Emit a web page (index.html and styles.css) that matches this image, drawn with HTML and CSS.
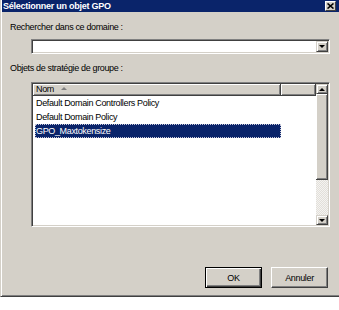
FILE: index.html
```html
<!DOCTYPE html>
<html lang="fr">
<head>
  <meta charset="UTF-8">
  <title>Sélectionner un objet GPO</title>
<link rel="stylesheet" href="styles.css">
</head>
<body>
  <div class="window">
    <div class="titlebar">
      <span class="title">Sélectionner un objet GPO</span>
      <span class="close-btn">
        <svg width="7" height="6" viewBox="0 0 7 6"><path d="M0.5 0.5 L6.5 5.5 M6.5 0.5 L0.5 5.5" stroke="#000" stroke-width="1.6"/></svg>
      </span>
    </div>

    <div class="content">
      <div class="label label-first">Rechercher dans ce domaine :</div>
      <div class="combo">
        <div class="combo-field"></div>
        <div class="combo-btn"><span class="arrow-down"></span></div>
      </div>

      <div class="label label-second">Objets de stratégie de groupe :</div>
      <div class="listview">
        <div class="lv-main">
          <div class="lv-header">
            <div class="lv-col col-name">Nom <span class="sort-up"></span></div>
            <div class="lv-col col-extra"></div>
          </div>
          <div class="lv-rows">
            <div class="lv-row">Default Domain Controllers Policy</div>
            <div class="lv-row">Default Domain Policy</div>
            <div class="lv-row selected">GPO_Maxtokensize</div>
          </div>
        </div>
        <div class="scrollbar">
          <div class="sb-btn"><span class="arrow-up"></span></div>
          <div class="sb-thumb"></div>
          <div class="sb-track"></div>
          <div class="sb-btn"><span class="arrow-down"></span></div>
        </div>
      </div>

      <div class="buttons">
        <button class="btn btn-default">OK</button>
        <button class="btn">Annuler</button>
      </div>
    </div>
  </div>
</body>
</html>
```

FILE: styles.css
```css
* {
  box-sizing: border-box;
}

html, body {
  margin: 0;
  padding: 0;
  background-color: #fff;
}

body {
  font-family: "Liberation Sans", Arial, sans-serif;
  font-size: 9px;
  letter-spacing: -0.35px;
  color: #000;
}

.window {
  width: 339px;
  height: 297px;
  background-color: #d4d0c8;
  border-left: 1px solid #d4d0c8;
  border-bottom: 1px solid #404040;
  box-shadow: inset 1px 0 #fff, inset 0 -1px #808080;
  padding-left: 1px;
}

.titlebar {
  height: 12px;
  background-color: #0a246a;
  color: #fff;
  display: flex;
  align-items: center;
  justify-content: space-between;
  padding: 0 3px 0 1px;
}

.title {
  font-weight: bold;
  font-size: 9px;
  letter-spacing: -0.25px;
}

.close-btn {
  width: 11px;
  height: 10px;
  background-color: #d4d0c8;
  border-top: 1px solid #fff;
  border-left: 1px solid #fff;
  border-right: 1px solid #404040;
  border-bottom: 1px solid #404040;
  display: flex;
  align-items: center;
  justify-content: center;
}

.content {
  padding: 0 11px 0 8px;
}

.label {
  line-height: 12px;
}

.label-first {
  margin-top: 9px;
}

.label-second {
  margin-top: 8px;
}

.combo {
  margin: 6px 0 0 21px;
  width: 299px;
  height: 15px;
  display: flex;
  background-color: #fff;
  border-top: 1px solid #808080;
  border-left: 1px solid #808080;
  border-right: 1px solid #fff;
  border-bottom: 1px solid #fff;
  box-shadow: inset 1px 1px #404040, inset -1px -1px #d4d0c8;
  padding: 1px;
}

.combo-field {
  flex: 1;
}

.combo-btn,
.sb-btn {
  width: 12px;
  background-color: #d4d0c8;
  border-top: 1px solid #d4d0c8;
  border-left: 1px solid #d4d0c8;
  border-right: 1px solid #404040;
  border-bottom: 1px solid #404040;
  box-shadow: inset 1px 1px #fff, inset -1px -1px #808080;
  display: flex;
  align-items: center;
  justify-content: center;
}

.arrow-down {
  width: 0;
  height: 0;
  border-left: 3px solid transparent;
  border-right: 3px solid transparent;
  border-top: 3px solid #000;
}

.arrow-up {
  width: 0;
  height: 0;
  border-left: 3px solid transparent;
  border-right: 3px solid transparent;
  border-bottom: 3px solid #000;
}

.listview {
  margin: 8px 0 0 21px;
  width: 299px;
  height: 145px;
  display: flex;
  background-color: #fff;
  border-top: 1px solid #808080;
  border-left: 1px solid #808080;
  border-right: 1px solid #fff;
  border-bottom: 1px solid #fff;
  box-shadow: inset 1px 1px #404040, inset -1px -1px #d4d0c8;
  padding: 1px;
}

.lv-main {
  flex: 1;
  display: flex;
  flex-direction: column;
}

.lv-header {
  display: flex;
  height: 12px;
}

.lv-col {
  background-color: #d4d0c8;
  border-right: 1px solid #404040;
  border-bottom: 1px solid #404040;
  box-shadow: inset 1px 1px #fff, inset -1px -1px #808080;
  line-height: 11px;
  padding-left: 3px;
}

.col-name {
  width: 248px;
}

.col-extra {
  flex: 1;
}

.sort-up {
  display: inline-block;
  margin-left: 5px;
  vertical-align: 2px;
  width: 0;
  height: 0;
  border-left: 3px solid transparent;
  border-right: 3px solid transparent;
  border-bottom: 3px solid #808080;
}

.lv-rows {
  padding-left: 2px;
}

.lv-row {
  width: 246px;
  height: 14px;
  line-height: 14px;
  padding-left: 1px;
}

.lv-row.selected {
  background-color: #0a246a;
  color: #fff;
  outline: 1px dotted #c8c8d8;
  outline-offset: -1px;
}

.scrollbar {
  width: 12px;
  display: flex;
  flex-direction: column;
}

.scrollbar .sb-btn {
  height: 10px;
}

.sb-thumb {
  height: 86px;
  background-color: #d4d0c8;
  border-right: 1px solid #404040;
  border-bottom: 1px solid #404040;
  box-shadow: inset 1px 1px #fff, inset -1px -1px #808080;
}

.sb-track {
  flex: 1;
  background-image: repeating-conic-gradient(#e2dfd9 0 25%, #f4f3f1 0 50%);
  background-size: 2px 2px;
}

.buttons {
  margin-top: 40px;
  display: flex;
  justify-content: flex-end;
  gap: 9px;
}

.btn {
  width: 57px;
  height: 21px;
  font-family: "Liberation Sans", Arial, sans-serif;
  font-size: 9px;
  letter-spacing: -0.35px;
  color: #000;
  background-color: #d4d0c8;
  border-top: 1px solid #fff;
  border-left: 1px solid #fff;
  border-right: 1px solid #404040;
  border-bottom: 1px solid #404040;
  box-shadow: inset -1px -1px #808080;
  padding: 0;
}

.btn-default {
  border: 1px solid #000;
  box-shadow: inset 1px 1px #fff, inset -1px -1px #404040, inset -2px -2px #808080;
}
```
